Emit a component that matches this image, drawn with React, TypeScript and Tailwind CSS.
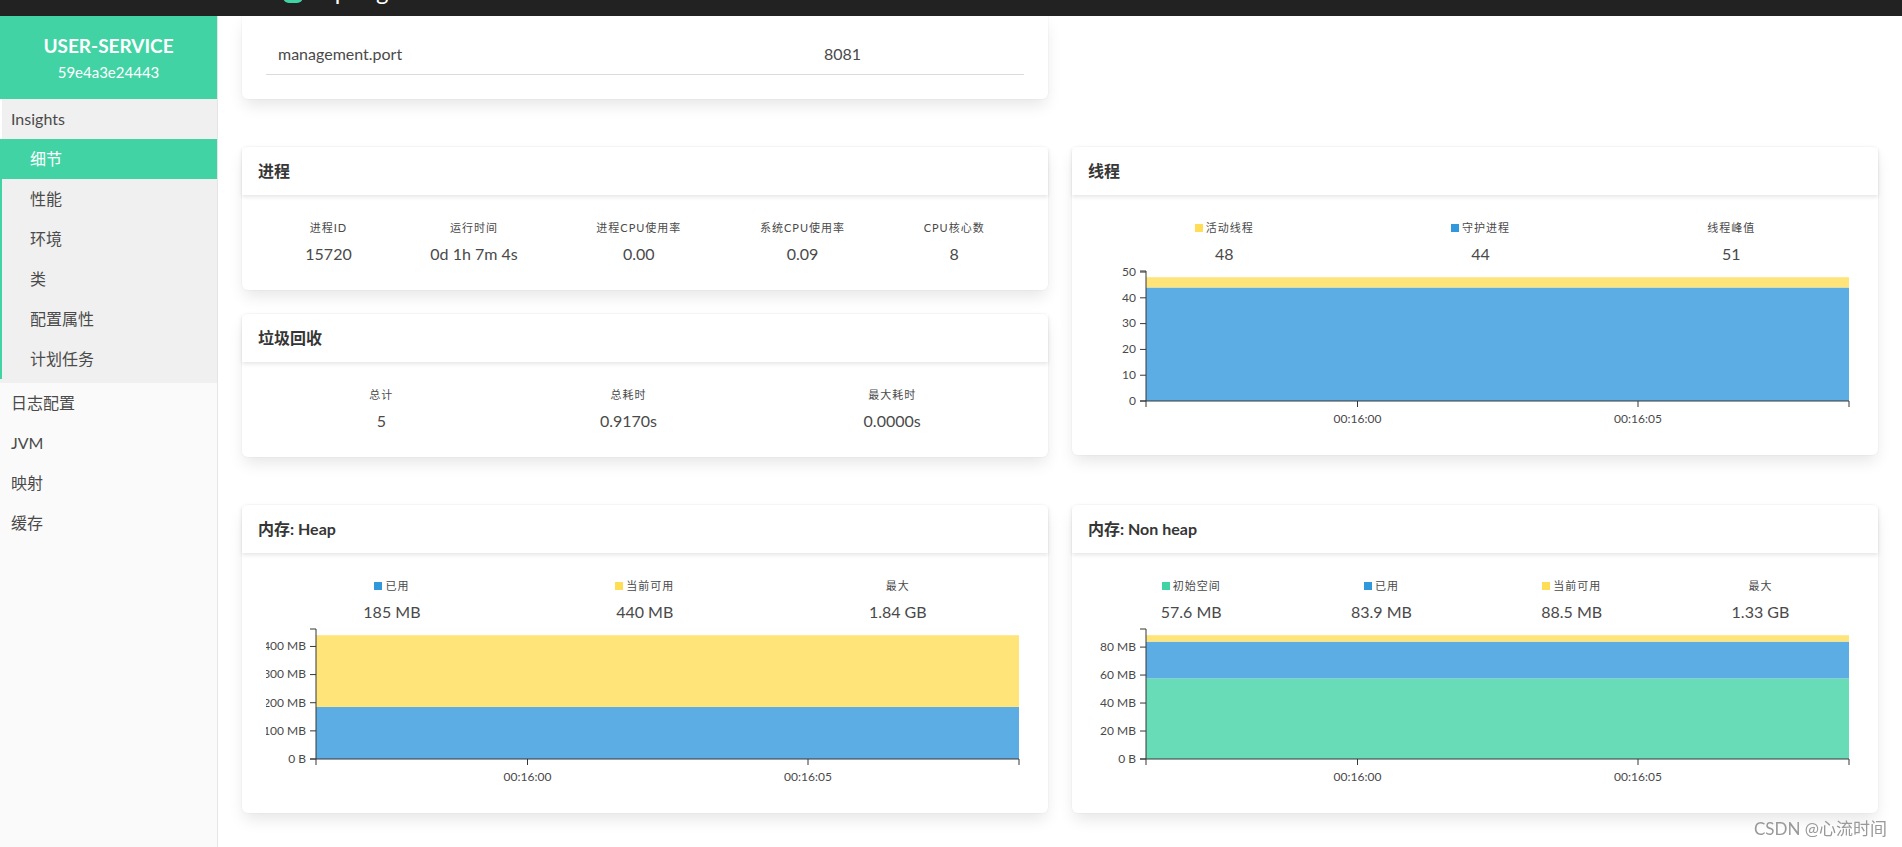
import React from 'react';

interface Stat {
  label: string;
  value: string;
  color?: string;
}

interface Band {
  value: number;
  fill: string;
}

const GREEN = '#42d3a5';
const BLUE = '#3298dc';
const YELLOW = '#ffdd57';

const cardClass =
  'bg-white rounded-md shadow-[0_8px_16px_-2px_rgba(10,10,10,0.1),0_0_0_1px_rgba(10,10,10,0.02)]';

const CardHeader: React.FC<{ title: React.ReactNode }> = ({ title }) => (
  <div className="relative px-4 py-3 leading-6 font-bold text-[#363636] shadow-[0_2px_4px_rgba(10,10,10,0.1)]">
    {title}
  </div>
);

const StatRow: React.FC<{ stats: Stat[] }> = ({ stats }) => (
  <div className="flex">
    {stats.map(s => (
      <div key={s.label} className="grow basis-auto flex flex-col items-center">
        <div className="flex items-center text-[11px] tracking-[1px] uppercase leading-[18px] mb-[5px]">
          {s.color && <span className="w-2 h-2 mr-[3px]" style={{ background: s.color }} />}
          {s.label}
        </div>
        <div className="leading-6">{s.value}</div>
      </div>
    ))}
  </div>
);

// stacked flat areas, like the d3 charts in the admin ui
const AreaChart: React.FC<{ bands: Band[]; max: number; ticks: number[]; fmt: (v: number) => string }> = ({
  bands,
  max,
  ticks,
  fmt,
}) => {
  const W = 758;
  const H = 165;
  const L = 50;
  const R = 753;
  const T = 5;
  const B = 135;
  const top = max * 1.05;
  const y = (v: number) => B - (v / top) * (B - T);
  const times = [
    { x: L + 211.5, label: '00:16:00' },
    { x: L + 492, label: '00:16:05' },
  ];
  let prev = 0;
  return (
    <div className="overflow-x-clip">
      <svg width={W} height={H} className="block overflow-visible text-[12px]">
        {bands.map(b => {
          const y0 = y(prev);
          const y1 = y(b.value);
          prev = b.value;
          return <rect key={b.value} x={L} y={y1} width={R - L} height={y0 - y1} fill={b.fill} />;
        })}
        <path d={`M${L - 6},${T}H${L}V${B}H${L - 6}`} fill="none" stroke="#363636" />
        {ticks.map(t => (
          <g key={t}>
            <line x1={L - 6} x2={L} y1={y(t)} y2={y(t)} stroke="#363636" />
            <text x={L - 10} y={y(t)} dy="0.32em" textAnchor="end" fill="#4a4a4a">
              {fmt(t)}
            </text>
          </g>
        ))}
        <path d={`M${L},${B + 6}V${B}H${R}V${B + 6}`} fill="none" stroke="#363636" />
        {times.map(t => (
          <g key={t.label}>
            <line x1={t.x} x2={t.x} y1={B} y2={B + 6} stroke="#363636" />
            <text x={t.x} y={B + 13} dy="0.71em" textAnchor="middle" fill="#4a4a4a">
              {t.label}
            </text>
          </g>
        ))}
      </svg>
    </div>
  );
};

const insights = ['细节', '性能', '环境', '类', '配置属性', '计划任务'];
const others = ['日志配置', 'JVM', '映射', '缓存'];

const App: React.FC = () => {
  return (
    <div className="h-screen flex flex-col overflow-hidden bg-white text-[#4a4a4a] text-base font-[Lato,'Noto_Sans_CJK_SC',sans-serif]">
      <div className="h-4 shrink-0 bg-[#222] overflow-hidden flex items-start pl-[283px]">
        <div className="w-5 h-[23px] -mt-5 rounded-md bg-[#42d3a5]" />
        <div className="ml-[19px] -mt-[21px] text-[24px] leading-6 text-white whitespace-nowrap">Spring Boot Admin</div>
      </div>

      <div className="flex flex-1 min-h-0">
        <aside className="w-[218px] shrink-0 bg-[#fafafa] border-r border-[#e5e5e5]">
          <div className="bg-[#42d3a5] text-white text-center pt-[18px] pb-[17px]">
            <div className="text-[19px] leading-6 font-bold">USER-SERVICE</div>
            <div className="text-[15px] leading-5 mt-1">59e4a3e24443</div>
          </div>
          <div className="bg-[#f0f0f0] pb-1">
            <div className="h-10 flex items-center pl-[9px] border-l-2 border-white">Insights</div>
            <ul className="border-l-2 border-[#42d3a5]">
              {insights.map((item, i) => (
                <li
                  key={item}
                  className={`h-10 flex items-center pl-[28px] ${i === 0 ? 'bg-[#42d3a5] text-white' : ''}`}
                >
                  {item}
                </li>
              ))}
            </ul>
          </div>
          <ul>
            {others.map(item => (
              <li key={item} className="h-10 flex items-center pl-[11px]">
                {item}
              </li>
            ))}
          </ul>
        </aside>

        <main className="flex-1 px-6 overflow-hidden">
          <div className="grid grid-cols-2 gap-6">
            <div className={`${cardClass} rounded-t-none px-6 pt-[18px] pb-6`}>
              <div className="grid grid-cols-[546px_1fr] border-b border-[#dbdbdb]">
                <div className="px-3 py-2 leading-6">management.port</div>
                <div className="px-3 py-2 leading-6">8081</div>
              </div>
            </div>
          </div>

          <div className="mt-12 grid grid-cols-2 gap-6 items-start">
            <div className="flex flex-col gap-6">
              <div className={cardClass}>
                <CardHeader title="进程" />
                <div className="p-6">
                  <StatRow
                    stats={[
                      { label: '进程ID', value: '15720' },
                      { label: '运行时间', value: '0d 1h 7m 4s' },
                      { label: '进程CPU使用率', value: '0.00' },
                      { label: '系统CPU使用率', value: '0.09' },
                      { label: 'CPU核心数', value: '8' },
                    ]}
                  />
                </div>
              </div>
              <div className={cardClass}>
                <CardHeader title="垃圾回收" />
                <div className="p-6">
                  <StatRow
                    stats={[
                      { label: '总计', value: '5' },
                      { label: '总耗时', value: '0.9170s' },
                      { label: '最大耗时', value: '0.0000s' },
                    ]}
                  />
                </div>
              </div>
            </div>

            <div className={cardClass}>
              <CardHeader title="线程" />
              <div className="p-6">
                <StatRow
                  stats={[
                    { label: '活动线程', value: '48', color: YELLOW },
                    { label: '守护进程', value: '44', color: BLUE },
                    { label: '线程峰值', value: '51' },
                  ]}
                />
                <AreaChart
                  bands={[
                    { value: 44, fill: '#5badE3' },
                    { value: 48, fill: '#ffe479' },
                  ]}
                  max={48}
                  ticks={[0, 10, 20, 30, 40, 50]}
                  fmt={v => String(v)}
                />
              </div>
            </div>
          </div>

          <div className="mt-12 grid grid-cols-2 gap-6 items-start">
            <div className={cardClass}>
              <CardHeader title="内存: Heap" />
              <div className="p-6">
                <StatRow
                  stats={[
                    { label: '已用', value: '185 MB', color: BLUE },
                    { label: '当前可用', value: '440 MB', color: YELLOW },
                    { label: '最大', value: '1.84 GB' },
                  ]}
                />
                <AreaChart
                  bands={[
                    { value: 185, fill: '#5badE3' },
                    { value: 440, fill: '#ffe479' },
                  ]}
                  max={440}
                  ticks={[0, 100, 200, 300, 400]}
                  fmt={v => (v === 0 ? '0 B' : `${v} MB`)}
                />
              </div>
            </div>

            <div className={cardClass}>
              <CardHeader title="内存: Non heap" />
              <div className="p-6">
                <StatRow
                  stats={[
                    { label: '初始空间', value: '57.6 MB', color: GREEN },
                    { label: '已用', value: '83.9 MB', color: BLUE },
                    { label: '当前可用', value: '88.5 MB', color: YELLOW },
                    { label: '最大', value: '1.33 GB' },
                  ]}
                />
                <AreaChart
                  bands={[
                    { value: 57.6, fill: '#68dcb7' },
                    { value: 83.9, fill: '#5badE3' },
                    { value: 88.5, fill: '#ffe479' },
                  ]}
                  max={88.5}
                  ticks={[0, 20, 40, 60, 80]}
                  fmt={v => (v === 0 ? '0 B' : `${v} MB`)}
                />
              </div>
            </div>
          </div>
        </main>
      </div>

      <div className="fixed right-[15px] bottom-[6px] text-[17px] leading-6 text-[#999]">CSDN @心流时间</div>
    </div>
  );
};

export default App;
